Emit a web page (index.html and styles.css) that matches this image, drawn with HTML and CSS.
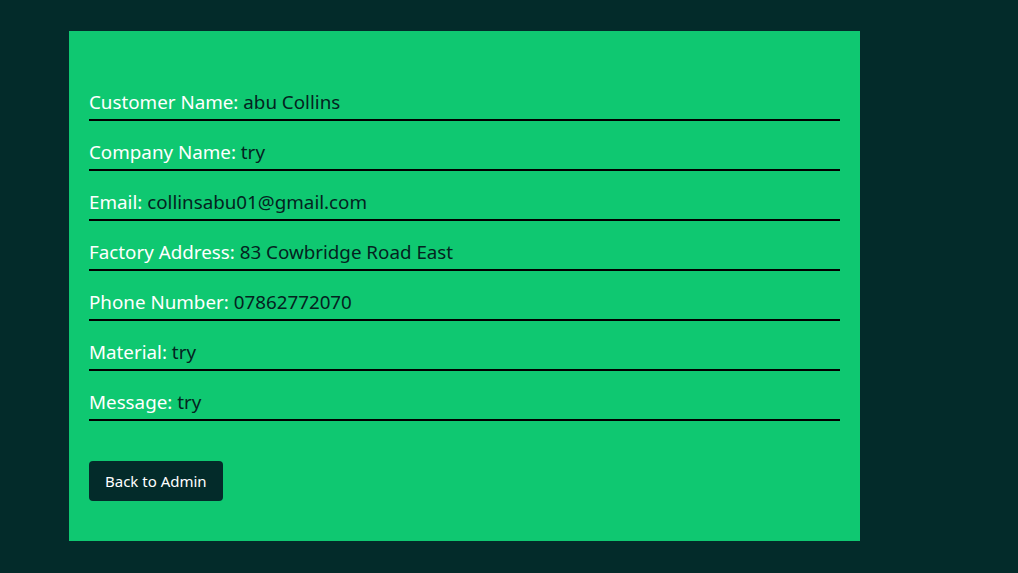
FILE: index.html
```html
<!DOCTYPE html>
<html>
<head>
<meta charset="utf-8">
<link rel="stylesheet" href="styles.css">
</head>
<body>
<main class="page">
  <section class="card">
    <div class="row"><span class="label">Customer Name:</span> <span class="value">abu Collins</span></div>
    <div class="row"><span class="label">Company Name:</span> <span class="value">try</span></div>
    <div class="row"><span class="label">Email:</span> <span class="value">collinsabu01@gmail.com</span></div>
    <div class="row"><span class="label">Factory Address:</span> <span class="value">83 Cowbridge Road East</span></div>
    <div class="row"><span class="label">Phone Number:</span> <span class="value">07862772070</span></div>
    <div class="row"><span class="label">Material:</span> <span class="value">try</span></div>
    <div class="row"><span class="label">Message:</span> <span class="value">try</span></div>
    <a class="btn" href="#">Back to Admin</a>
  </section>
</main>
</body>
</html>
```
FILE: styles.css
```css
html, body {
  margin: 0;
  padding: 0;
  background: #032b2a;
  height: 100%;
}
body {
  font-family: "Noto Sans", "Open Sans", sans-serif;
}
.page {
  padding: 31px 0 0 69px;
}
.card {
  width: 751px;
  height: 450px;
  box-sizing: content-box;
  background: #0fc871;
  padding: 40px 20px 20px 20px;
  display: flex;
  flex-direction: column;
}
.row {
  font-size: 18.8px;
  line-height: 30px;
  padding-top: 16px;
  padding-bottom: 2px;
  border-bottom: 2px solid #000;
  white-space: nowrap;
}
.label {
  color: #ffffff;
}
.value {
  color: #04231f;
}
.btn {
  align-self: flex-start;
  margin-top: 40px;
  background: #032b2a;
  color: #ffffff;
  text-decoration: none;
  font-size: 15px;
  line-height: 24px;
  padding: 8px 16px;
  border-radius: 4px;
}
```
